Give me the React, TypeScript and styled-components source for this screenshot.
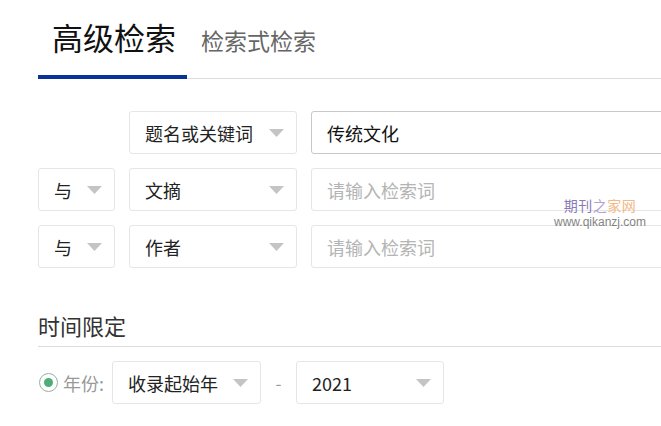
import React from "react"
import styled, { createGlobalStyle } from "styled-components"

const GlobalStyle = createGlobalStyle`
    body {
        margin: 0;
        background: #fff;
        overflow: hidden;
        font-family: "Noto Sans CJK SC", "Noto Sans", sans-serif;
        color: #222;
    }
`

const fieldRows = [
    { logic: null, field: "题名或关键词", value: "传统文化" },
    { logic: "与", field: "文摘", value: "" },
    { logic: "与", field: "作者", value: "" },
]

const Caret = () => (
    <svg width="15" height="8" viewBox="0 0 15 8">
        <path d="M0 0 H15 L7.5 8 Z" fill="#c4c4c4" />
    </svg>
)

const Dropdown = ({ label, width }: { label: string; width: number }) => (
    <Select $width={width}>
        <span>{label}</span>
        <Caret />
    </Select>
)

export default function App() {
    return (
        <>
            <GlobalStyle />
            <Page>
                <Tabs>
                    <Tab $active>高级检索</Tab>
                    <Tab>检索式检索</Tab>
                </Tabs>

                <Rows>
                    {fieldRows.map((row, index) => (
                        <Row key={index}>
                            {row.logic ? <Dropdown label={row.logic} width={77} /> : <span />}
                            <Dropdown label={row.field} width={168} />
                            <Input $filled={!!row.value}>{row.value || "请输入检索词"}</Input>
                        </Row>
                    ))}
                </Rows>

                <SectionTitle>时间限定</SectionTitle>
                <TimeRow>
                    <Radio />
                    <Label>年份:</Label>
                    <Dropdown label="收录起始年" width={149} />
                    <Dash>-</Dash>
                    <Dropdown label="2021" width={148} />
                </TimeRow>

                <Watermark>
                    <Brand>
                        <span>期刊</span>
                        <span>之</span>
                        <span>家网</span>
                    </Brand>
                    <Site>www.qikanzj.com</Site>
                </Watermark>
            </Page>
        </>
    )
}

const Page = styled.div`
    position: relative;
    width: 760px;
    padding-left: 38px;
    height: 426px;
`

const Tabs = styled.div`
    display: flex;
    align-items: flex-end;
    height: 79px;
    border-bottom: 1px solid #dcdcdc;
    box-sizing: border-box;
    width: 623px;
`

const Tab = styled.div<{ $active?: boolean }>`
    display: flex;
    align-items: center;
    box-sizing: border-box;
    height: ${(p) => (p.$active ? "80px" : "76px")};
    margin-bottom: ${(p) => (p.$active ? "-1px" : "0")};
    padding: ${(p) => (p.$active ? "0 11px 1px 14px" : "0 14px")};
    border-bottom: ${(p) => (p.$active ? "4px solid #0a3297" : "none")};
    font-size: ${(p) => (p.$active ? "31px" : "23px")};
    color: ${(p) => (p.$active ? "#111" : "#666")};
`

const Rows = styled.div`
    display: flex;
    flex-direction: column;
    gap: 14px;
    margin-top: 32px;
`

const Row = styled.div`
    display: grid;
    grid-template-columns: 77px 168px 360px;
    gap: 14px;
    height: 43px;
`

const Select = styled.div<{ $width: number }>`
    box-sizing: border-box;
    width: ${(p) => p.$width}px;
    height: 43px;
    display: flex;
    align-items: center;
    justify-content: space-between;
    padding: 0 12px 0 15px;
    border: 1px solid #e6e6e6;
    border-radius: 3px;
    font-size: 18px;
    color: #222;
`

const Input = styled.div<{ $filled: boolean }>`
    box-sizing: border-box;
    height: 43px;
    display: flex;
    align-items: center;
    padding-left: 15px;
    border: 1px solid ${(p) => (p.$filled ? "#c8c8c8" : "#e6e6e6")};
    border-radius: 3px;
    font-size: 18px;
    color: ${(p) => (p.$filled ? "#111" : "#b4b4b4")};
`

const SectionTitle = styled.div`
    margin-top: 42px;
    width: 623px;
    padding-bottom: 6px;
    border-bottom: 1px solid #dcdcdc;
    font-size: 22px;
    line-height: 30px;
    color: #333;
`

const TimeRow = styled.div`
    display: flex;
    align-items: center;
    margin-top: 14px;
    height: 43px;
`

const Radio = styled.span`
    box-sizing: border-box;
    width: 19px;
    height: 19px;
    margin-left: 1px;
    border: 1.5px solid #8fb49d;
    border-radius: 50%;
    display: flex;
    align-items: center;
    justify-content: center;

    &::after {
        content: "";
        width: 9px;
        height: 9px;
        border-radius: 50%;
        background: #4fae78;
    }
`

const Label = styled.span`
    margin: 0 8px 0 5px;
    font-size: 18px;
    color: #999;
`

const Dash = styled.span`
    width: 35px;
    text-align: center;
    font-size: 17px;
    color: #999;
`

const Watermark = styled.div`
    position: absolute;
    left: 554px;
    top: 197px;
    display: flex;
    flex-direction: column;
    align-items: center;
    opacity: 0.8;
`

const Brand = styled.div`
    font-size: 14px;
    line-height: 16px;
    letter-spacing: 0.5px;

    span:nth-child(1) {
        color: #6c5aa6;
    }
    span:nth-child(2) {
        color: #a08cc8;
    }
    span:nth-child(3) {
        color: #f0a868;
    }
`

const Site = styled.div`
    margin-top: 3px;
    font-family: "Liberation Sans", Arial, sans-serif;
    font-size: 12px;
    line-height: 13px;
    color: #666;
`
